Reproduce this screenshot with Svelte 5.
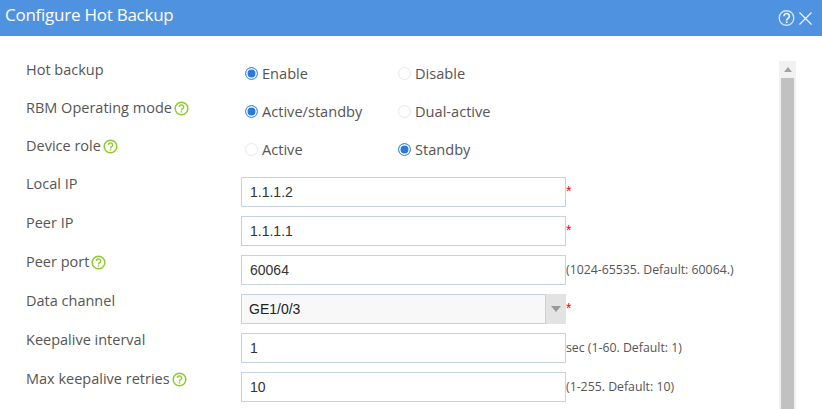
<script>
  const radioRows = [
    { label: "Hot backup", options: ["Enable", "Disable"], selected: 0 },
    { label: "RBM Operating mode", help: true, options: ["Active/standby", "Dual-active"], selected: 0 },
    { label: "Device role", help: true, options: ["Active", "Standby"], selected: 1 },
  ];
  const fieldRows = [
    { label: "Local IP", value: "1.1.1.2", required: true },
    { label: "Peer IP", value: "1.1.1.1", required: true },
    { label: "Peer port", help: true, value: "60064", hint: "(1024-65535. Default: 60064.)" },
    { label: "Data channel", value: "GE1/0/3", required: true, select: true },
    { label: "Keepalive interval", value: "1", hint: "sec (1-60. Default: 1)" },
    { label: "Max keepalive retries", help: true, value: "10", hint: "(1-255. Default: 10)" },
  ];
</script>

{#snippet helpIcon()}
  <svg class="help" width="15" height="15" viewBox="0 0 15 15">
    <circle cx="7.5" cy="7.5" r="6.3" fill="none" stroke="#8ccb2e" stroke-width="1.5" />
    <path d="M5.4 6a2.1 2.1 0 1 1 3.3 1.7c-.8.5-1.2.9-1.2 1.7" fill="none" stroke="#8ccb2e" stroke-width="1.4" />
    <rect x="6.8" y="10.2" width="1.4" height="1.4" fill="#8ccb2e" />
  </svg>
{/snippet}

<div class="dialog">
  <header class="dialog__head">
    <h1>Configure Hot Backup</h1>
    <div class="dialog__tools">
      <svg width="20" height="20" viewBox="0 0 20 20">
        <circle cx="9.5" cy="10" r="7.3" fill="none" stroke="#cfe2f8" stroke-width="1.4" />
        <path d="M6.9 8.2a2.7 2.7 0 1 1 4.2 2.2c-1 .7-1.5 1.1-1.5 2.2" fill="none" stroke="#fff" stroke-width="1.5" />
        <rect x="8.8" y="13.4" width="1.7" height="1.7" fill="#fff" />
      </svg>
      <svg width="15" height="15" viewBox="0 0 15 15">
        <path d="M1.5 1.5l12 12M13.5 1.5l-12 12" stroke="#f2f7fd" stroke-width="1.2" fill="none" />
      </svg>
    </div>
  </header>

  <div class="dialog__body">
    <form class="form">
      {#each radioRows as row}
        <div class="row row--radio">
          <div class="label">{row.label}{#if row.help}{@render helpIcon()}{/if}</div>
          <div class="options">
            {#each row.options as opt, i}
              <span class="option">
                <span class="radio" class:radio--on={row.selected === i}></span>{opt}
              </span>
            {/each}
          </div>
        </div>
      {/each}
      <div class="fields">
        {#each fieldRows as row}
          <div class="row row--field">
            <div class="label">{row.label}{#if row.help}{@render helpIcon()}{/if}</div>
            <div class="control" class:control--select={row.select}>
              <span class="value">{row.value}</span>
              {#if row.select}
                <span class="caret"></span>
              {/if}
            </div>
            {#if row.required}<span class="star">*</span>{/if}
            {#if row.hint}<span class="hint">{row.hint}</span>{/if}
          </div>
        {/each}
      </div>
    </form>

    <div class="scrollbar">
      <div class="scrollbar__up"></div>
      <div class="scrollbar__thumb"></div>
    </div>
  </div>
</div>

<style>
  :global(body) { background: #fff; overflow: hidden; }
  .dialog {
    width: 822px; height: 409px; overflow: hidden;
    font-family: "Open Sans", "Noto Sans", sans-serif;
    color: #555;
  }
  .dialog__head {
    display: flex; align-items: center; justify-content: space-between;
    height: 36px; background: #4f92e0; color: #fff;
  }
  .dialog__head h1 {
    margin: 0 0 0 5px; font-size: 17px; font-weight: 400; line-height: 30px;
    letter-spacing: -0.25px; align-self: flex-start;
  }
  .dialog__tools {
    display: flex; align-items: center; gap: 1px; padding: 0 9px 0 0;
  }
  .dialog__body {
    display: flex; justify-content: space-between; height: 373px; padding-right: 26px;
  }
  .form { padding: 24px 0 0 26px; width: 720px; }
  .fields { padding-top: 3px; }
  .row { display: flex; align-items: flex-start; }
  .row--radio { height: 38px; }
  .row--field { height: 39px; }
  .label {
    display: flex; align-items: center; width: 215px; flex-shrink: 0;
    font-size: 14.5px; line-height: 20px; color: #555;
  }
  .row--field .label { margin-top: -3px; }
  .help { margin-left: 2px; }
  .options { display: flex; padding-top: 3px; }
  .option {
    display: flex; align-items: center; width: 153px; margin-left: 4px; margin-right: -4px;
    font-size: 14.6px; line-height: 20px; color: #555;
  }
  .radio {
    width: 13px; height: 13px; margin-right: 4px; border-radius: 50%;
    border: 1px solid #e8e8e8; box-sizing: border-box; background: #fff;
  }
  .radio--on {
    border-color: #4a8fde; box-shadow: inset 0 0 0 1.5px #fff; background: #2a7ad8;
  }
  .control {
    display: flex; align-items: center; box-sizing: border-box;
    width: 325px; height: 30px; padding-left: 8px; flex-shrink: 0;
    border: 1px solid #c5d2e4; background: #fff;
    font-family: "Liberation Sans", Arial, sans-serif; font-size: 14px; color: #333;
  }
  .control--select {
    justify-content: space-between; padding-left: 7px; padding-right: 0; background: #f8f8f8; color: #222;
  }
  .caret {
    display: flex; align-items: center; justify-content: center;
    width: 20px; height: 30px; margin: 0 -1px 0 0; flex-shrink: 0;
    background: #e3e3e3;
    border-left: 1px solid #c5d2e4;
  }
  .caret::after {
    content: ""; border-top: 6px solid #999;
    border-left: 5px solid transparent; border-right: 5px solid transparent;
  }
  .star { color: #f00; font-size: 14px; line-height: 28px; font-family: "Liberation Sans", Arial, sans-serif; }
  .hint {
    font-size: 12.3px; line-height: 30px; white-space: nowrap; color: #555;
  }
  .scrollbar {
    width: 17px; height: 348px; margin-top: 25px; background: #f1f1f1; flex-shrink: 0;
  }
  .scrollbar__up {
    height: 17px; display: flex; align-items: center; justify-content: center;
  }
  .scrollbar__up::after {
    content: ""; border-bottom: 5px solid #a3a3a3;
    border-left: 4px solid transparent; border-right: 4px solid transparent;
  }
  .scrollbar__thumb { height: 331px; margin: 0 2px; background: #c1c1c1; }
</style>
